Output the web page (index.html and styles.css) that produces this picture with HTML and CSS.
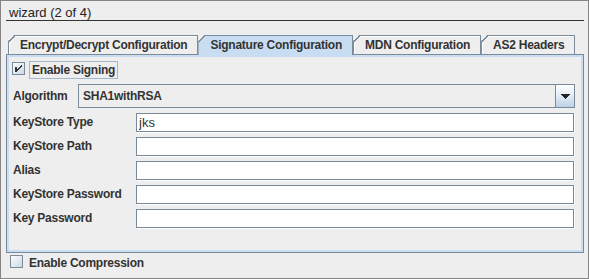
FILE: index.html
```html
<!DOCTYPE html>
<html lang="en">
<head>
  <meta charset="UTF-8">
  <title>wizard (2 of 4)</title>
  <link rel="stylesheet" href="styles.css">
</head>
<body>
  <div class="window">
    <div class="title">wizard (2 of 4)</div>

    <div class="tabs">
      <div class="tab">Encrypt/Decrypt Configuration</div>
      <div class="tab selected">Signature Configuration</div>
      <div class="tab">MDN Configuration</div>
      <div class="tab">AS2 Headers</div>
    </div>

    <div class="panel">
      <div class="check-row">
        <svg class="checkbox" width="13" height="13" viewBox="0 0 13 13" shape-rendering="crispEdges">
          <defs>
            <linearGradient id="cbfill" x1="0" y1="0" x2="1" y2="1">
              <stop offset="0" stop-color="#ffffff"/>
              <stop offset="1" stop-color="#c6d6e6"/>
            </linearGradient>
          </defs>
          <rect x="0.5" y="0.5" width="12" height="12" fill="url(#cbfill)" stroke="#7a8a99"/>
          <rect x="3" y="5" width="2" height="5" fill="#333"/>
          <path d="M9 3H10V5H9V6H8V7H7V8H6V9H5V7H6V6H7V5H8V4H9Z" fill="#333"/>
        </svg>
        <span class="check-label focused">Enable Signing</span>
      </div>

      <div class="algo-row">
        <span class="algo-label">Algorithm</span>
        <div class="combo">
          <span class="combo-value">SHA1withRSA</span>
          <span class="combo-btn">
            <svg width="9" height="5" viewBox="0 0 9 5" shape-rendering="crispEdges">
              <path d="M0 0H9V1H8V2H7V3H6V4H5V5H4V4H3V3H2V2H1V1H0Z" fill="#222"/>
            </svg>
          </span>
        </div>
      </div>

      <div class="form">
        <label class="field-label">KeyStore Type</label>
        <input class="field" type="text" value="jks">
        <label class="field-label">KeyStore Path</label>
        <input class="field" type="text">
        <label class="field-label">Alias</label>
        <input class="field" type="text">
        <label class="field-label">KeyStore Password</label>
        <input class="field" type="password">
        <label class="field-label">Key Password</label>
        <input class="field" type="password">
      </div>
    </div>

    <div class="check-row bottom">
      <svg class="checkbox" width="13" height="13" viewBox="0 0 13 13" shape-rendering="crispEdges">
        <defs>
          <linearGradient id="cbfill2" x1="0" y1="0" x2="1" y2="1">
            <stop offset="0" stop-color="#ffffff"/>
            <stop offset="1" stop-color="#c6d6e6"/>
          </linearGradient>
        </defs>
        <rect x="0.5" y="0.5" width="12" height="12" fill="url(#cbfill2)" stroke="#7a8a99"/>
      </svg>
      <span class="check-label">Enable Compression</span>
    </div>
  </div>
</body>
</html>
```

FILE: styles.css
```css
body {
  margin: 0;
  background-color: #eeeeee;
  font-family: "Liberation Sans", Arial, sans-serif;
  color: #333333;
}
.window {
  box-sizing: border-box;
  width: 589px;
  height: 279px;
  border: 1px solid #858585;
  padding: 0 4px 0 5px;
  background-color: #eeeeee;
}
.title {
  height: 15px;
  padding: 4px 0 0 3px;
  border-bottom: 1px solid #333333;
  font-size: 13px;
  line-height: 15px;
  color: #222222;
}

/* tabs */
.tabs {
  display: flex;
  align-items: flex-start;
  height: 19px;
  margin-top: 14px;
  padding-left: 2px;
}
.tab {
  position: relative;
  box-sizing: border-box;
  height: 19px;
  padding: 0 10px 0 11px;
  border: 1px solid #7a8a99;
  border-bottom: none;
  background-color: #eeeeee;
  box-shadow: inset 1px 1px 0 #ffffff;
  font-size: 12px;
  font-weight: bold;
  letter-spacing: -0.25px;
  line-height: 18px;
  white-space: nowrap;
  clip-path: polygon(6px 0, 100% 0, 100% 100%, 0 100%, 0 6px);
}
.tab::before {
  content: "";
  position: absolute;
  left: -1px;
  top: -1px;
  width: 7px;
  height: 7px;
  background: linear-gradient(135deg, transparent 44%, #7a8a99 44%, #7a8a99 58%, transparent 58%);
}
.tab.selected {
  z-index: 1;
  height: 20px;
  background-color: #c8ddf2;
  box-shadow: none;
}

/* content panel */
.panel {
  box-sizing: border-box;
  height: 199px;
  padding: 6px 8px 0 5px;
  border: 1px solid #7a8a99;
  box-shadow: inset 0 0 0 2px #c8ddf2;
}
.check-row {
  display: flex;
  align-items: flex-start;
  height: 18px;
}
.checkbox {
  display: block;
  margin-top: 1px;
  flex: none;
}
.check-label {
  margin-left: 4px;
  padding: 0 2px;
  border: 1px solid transparent;
  font-size: 12px;
  font-weight: bold;
  letter-spacing: -0.25px;
  line-height: 16px;
}
.check-label.focused {
  border-color: #a3b8cc;
}
.check-row.bottom {
  margin: 1px 0 0 4px;
}
.check-row.bottom .check-label {
  margin-left: 3px;
}

.algo-row {
  display: flex;
  align-items: center;
  margin-top: 5px;
}
.algo-label {
  width: 65px;
  margin-left: 1px;
  font-size: 12px;
  font-weight: bold;
  letter-spacing: -0.25px;
}
.combo {
  flex: 1;
  display: flex;
  height: 24px;
  box-sizing: border-box;
  border: 1px solid #7a8a99;
  background-color: #eeeeee;
}
.combo-value {
  flex: 1;
  padding-left: 4px;
  font-size: 12px;
  font-weight: bold;
  letter-spacing: -0.25px;
  line-height: 22px;
}
.combo-btn {
  display: flex;
  align-items: center;
  justify-content: center;
  width: 18px;
  border-left: 1px solid #7a8a99;
  background: linear-gradient(#ffffff, #e4edf6 45%, #bcd1e6);
}

.form {
  display: grid;
  grid-template-columns: 124px 1fr;
  grid-auto-rows: 19px;
  row-gap: 5px;
  margin-top: 5px;
}
.field-label {
  padding-left: 1px;
  font-size: 12px;
  font-weight: bold;
  letter-spacing: -0.25px;
  line-height: 19px;
}
.field {
  box-sizing: border-box;
  height: 19px;
  margin: 0 1px 0 0;
  padding: 0 2px;
  border: 1px solid #7a8a99;
  box-shadow: 1px 1px 0 #ffffff;
  background-color: #ffffff;
  font-family: "Liberation Sans", Arial, sans-serif;
  font-size: 13px;
  color: #333333;
  outline: none;
}
```
